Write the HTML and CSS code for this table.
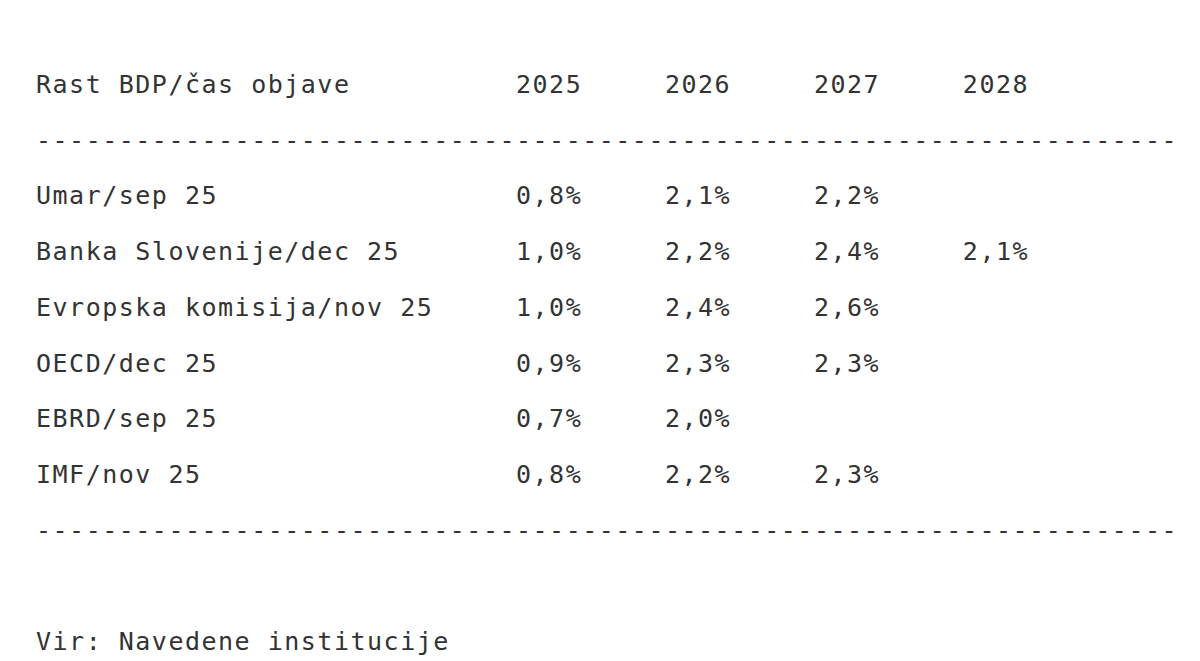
FILE: index.html
```html
<!DOCTYPE html>
<html lang="sl">
<head>
    <meta charset="UTF-8">
    <title>Rast BDP</title>
    <link rel="stylesheet" href="styles.css">
</head>
<body>
<pre class="gdp">Rast BDP/čas objave          2025     2026     2027     2028
---------------------------------------------------------------------
Umar/sep 25                  0,8%     2,1%     2,2%
Banka Slovenije/dec 25       1,0%     2,2%     2,4%     2,1%
Evropska komisija/nov 25     1,0%     2,4%     2,6%
OECD/dec 25                  0,9%     2,3%     2,3%
EBRD/sep 25                  0,7%     2,0%
IMF/nov 25                   0,8%     2,2%     2,3%
---------------------------------------------------------------------

Vir: Navedene institucije</pre>
</body>
</html>
```

FILE: styles.css
```css
body {
    margin: 0;
    background: #fff;
    overflow: hidden;
}

.gdp {
    margin: 0;
    padding: 57px 0 0 36px;
    font-family: 'DejaVu Sans Mono', monospace;
    font-size: 25px;
    letter-spacing: 1.5px;
    font-variant-numeric: slashed-zero;
    line-height: 55.7px;
    color: #333;
    white-space: pre;
}
```
